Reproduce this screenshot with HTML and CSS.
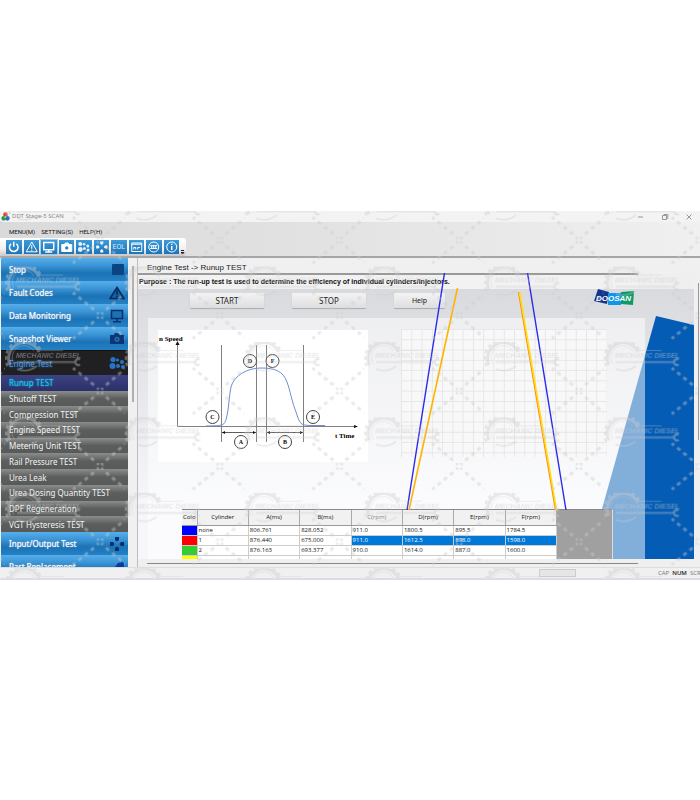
FILE: index.html
```html
<!DOCTYPE html>
<html lang="en">
<head>
<meta charset="utf-8">
<title>DDT Stage-5 SCAN</title>
<link rel="stylesheet" href="styles.css">
</head>
<body>
<div class="window">
  <header class="titlebar">
    <svg class="app-icon" viewBox="0 0 10 10"><circle cx="5" cy="3" r="2.6" fill="#d8432e"/><circle cx="3" cy="7" r="2.6" fill="#2d9a4a"/><circle cx="7" cy="7" r="2.6" fill="#2b6fc4"/><circle cx="5" cy="5.4" r="1" fill="#f4d35a"/></svg>
    <span class="title">DDT Stage-5 SCAN</span>
    <span class="controls">
      <button aria-label="Minimize"><svg viewBox="0 0 8 8"><path d="M1 4h5"/></svg></button>
      <button aria-label="Restore"><svg viewBox="0 0 8 8"><path d="M1.5 2.5h4v4h-4zM3 2.5v-1h3.8v4H5.5"/></svg></button>
      <button aria-label="Close"><svg viewBox="0 0 8 8"><path d="M1.5 1.5l5 5M6.500 1.500l-5 5"/></svg></button>
    </span>
  </header>
  <div class="bars">
    <nav class="menu">
      <button>MENU(M)</button><button>SETTING(S)</button><button>HELP(H)</button>
    </nav>
    <div class="toolbar">
      <button aria-label="Power"><svg viewBox="0 0 14 14"><path d="M4.400 3.800a4.300 4.300 0 1 0 5.200 0M7 1.800v5" stroke-width="1.500"/></svg></button>
      <button aria-label="Fault codes"><svg viewBox="0 0 14 14"><path d="M7 2L12.500 11.800h-11zM7 5.200v3.600M7 9.600v1.200" /></svg></button>
      <button class="on" aria-label="Data monitoring"><svg viewBox="0 0 14 14"><path d="M2 2.500h10v7.200H2zM7 9.700v2.100M3.500 12h7" stroke-width="1.400"/></svg></button>
      <button aria-label="Snapshot"><svg viewBox="0 0 14 14"><path d="M2 4.500h2.800l.7-1.500h3l.7 1.500H12v7H2z" fill="#fff"/><circle cx="7" cy="7.900" r="1.700" fill="#2683c6" stroke="none"/></svg></button>
      <button aria-label="Engine test"><svg viewBox="0 0 14 14"><g fill="#e4f1fb" stroke="none"><circle cx="3.500" cy="4" r="2"/><circle cx="3.500" cy="9.500" r="2.400"/><circle cx="7.300" cy="4.200" r="1.300"/><circle cx="7.600" cy="8.600" r="1.500"/><circle cx="11" cy="6" r="1.500"/><circle cx="11.300" cy="10" r="1.500"/></g></svg></button>
      <button aria-label="Input/output test"><svg viewBox="0 0 14 14"><g fill="#fff" stroke="none"><path d="M5.500 1.500h3v2L7 5 5.500 3.500zM5.500 12.500h3v-2L7 9l-1.500 1.500zM1.500 5.500v3h2L5 7 3.500 5.500zM12.500 5.500v3h-2L9 7l1.500-1.500z"/></g></svg></button>
      <button aria-label="EOL" class="eol">EOL</button>
      <button aria-label="Parameters"><svg viewBox="0 0 14 14"><path d="M2 3h10v8.500H2zM2 4.200h10" /><path d="M4 9.500V7.500h2v2M8 9.500v-2h2"/></svg></button>
      <button aria-label="DCU"><svg viewBox="0 0 14 14"><circle cx="7" cy="7" r="5"/><path d="M3.500 5.700h7M3.500 8.500h7M5 5.700v2.800M7 5.700v2.800M9 5.700v2.800"/></svg></button>
      <button aria-label="Information"><svg viewBox="0 0 14 14"><circle cx="7" cy="7" r="5"/><path d="M7 6v4M7 3.800v1.200" stroke-width="1.400"/></svg></button>
      <svg class="more" viewBox="0 0 4 14"><path d="M0 9.500h3M0 11.500h3l-1.500 1.500z"/></svg>
    </div>
  </div>

  <div class="body">
    <aside class="sidebar">
      <a class="item" href="#">Stop <svg viewBox="0 0 16 14"><rect x="3" y="1" width="12" height="11" rx="1" fill="#0b4480"/></svg></a>
      <a class="item" href="#">Fault Codes <svg viewBox="0 0 16 14"><path d="M8 1.500L15 12.500H1z" fill="#1262a5" stroke="#08285c" stroke-width="1.500"/><path d="M8 4.500v4.200M8 9.700v1.500" stroke="#08285c" stroke-width="1.600"/></svg></a>
      <a class="item" href="#">Data Monitoring <svg viewBox="0 0 16 14"><path d="M2.500 1.500h11v8h-11zM8 9.500v3M4 12.700h8" fill="#1d72b6" stroke="#08306a" stroke-width="1.600"/></svg></a>
      <a class="item" href="#">Snapshot Viewer <svg viewBox="0 0 16 14"><path d="M1 3h4l1-2h4l1 2h4v9H1z" fill="#0a3678"/><circle cx="8" cy="7.300" r="2.500" fill="#2a6fb0"/><circle cx="8" cy="7.300" r="1" fill="#0a3678"/></svg></a>
      <a class="item current" href="#">Engine Test <svg viewBox="0 0 16 14"><g fill="#2673c8"><circle cx="4" cy="3.500" r="2.600"/><circle cx="3.500" cy="10" r="3"/><circle cx="8.500" cy="4" r="1.600"/><circle cx="9" cy="10" r="2"/><circle cx="13" cy="6" r="2"/><circle cx="14" cy="11" r="2"/></g></svg></a>
      <div class="tests">
        <a class="chosen" href="#">Runup TEST</a>
        <a href="#">Shutoff TEST</a>
        <a href="#">Compression TEST</a>
        <a href="#">Engine Speed TEST</a>
        <a href="#">Metering Unit TEST</a>
        <a href="#">Rail Pressure TEST</a>
        <a href="#">Urea Leak</a>
        <a href="#">Urea Dosing Quantity TEST</a>
        <a href="#">DPF Regeneration</a>
        <a href="#">VGT Hysteresis TEST</a>
      </div>
      <a class="item" href="#">Input/Output Test <svg viewBox="0 0 16 14"><path d="M6 0h4v3L8 4.500 6 3zM6 14h4v-3L8 9.500 6 11zM1 5v4h3l1.500-2L4 5zM15 5v4h-3l-1.500-2L12 5z" fill="#0a2f70"/></svg></a>
      <a class="item" href="#">Part Replacement <svg viewBox="0 0 16 14"><path d="M1 8l5-1 3-4 5-1 1 2v8H3z" fill="#0a3aa0"/></svg></a>
    </aside>
    <div class="splitter"></div>

    <main class="main">
      <h1 class="crumb">Engine Test -&gt; Runup TEST</h1>
      <p class="purpose">Purpose : The run-up test is used to determine the efficiency of individual cylinders/injectors.</p>
      <section class="stage">
        <svg class="art" viewBox="0 0 110 243"><path d="M72 0L110 9V243H4z" fill="#045cb5"/></svg>
        <div class="actions">
          <button class="wide">START</button>
          <button class="wide">STOP</button>
          <button class="small">Help</button>
          <svg class="logo" viewBox="0 0 40 18">
            <path d="M4 0L15 3 13 15 0 12z" fill="#12368f"/><path d="M14 4h13v12H14z" fill="#1295e6"/><path d="M27 3l13-1-1 14-12-1z" fill="#0b9a68"/>
            <text x="2" y="12">DOOSAN</text>
          </svg>
        </div>
        <div class="panel">
          <div class="plots">
            <svg class="diagram" viewBox="0 0 210 132">
              <g stroke="#808080" fill="none"><path d="M19.500 14V96.500H198"/><path d="M63.500 15v97M98.500 15v97M108.500 15v97M145.500 15v97"/></g>
              <path d="M64 102.500H98M109 102.500H145" stroke="#333" stroke-width=".8"/>
              <path d="M19.500 11l-2 4h4zM200 96.500l-4-1.500v3zM64 102.500l3-1.500v3zM98 102.500l-3-1.500v3zM109 102.500l3-1.500v3zM145 102.500l-3-1.500v3z" fill="#111"/>
              <path d="M48 96C66 95.500 66 96 68.500 88 71 78 71 66 73 57 76 45 90 38 103 38 117 38 125 41 129 52 132 60 134 72 138 82 142 94 142 95 152 95.500H167" fill="none" stroke="#6c8fd0"/>
              <g fill="#fff" stroke="#444"><circle cx="92" cy="31" r="6.500"/><circle cx="114.500" cy="31" r="6.500"/><circle cx="54.500" cy="87" r="6.500"/><circle cx="155" cy="87" r="6.500"/><circle cx="83" cy="112" r="6.500"/><circle cx="127" cy="112" r="6.500"/></g>
              <g class="marks"><text x="92" y="33">D</text><text x="114.500" y="33">F</text><text x="54.500" y="89">C</text><text x="155" y="89">E</text><text x="83" y="114">A</text><text x="127" y="114">B</text></g>
              <text x="1" y="11">n Speed</text><text x="177" y="108">t Time</text>
            </svg>
            <svg class="grid" viewBox="0 0 206 128">
              <defs><pattern id="cell" width="10.280" height="10.280" patternUnits="userSpaceOnUse"><path d="M0 .5H10.280M.5 0V10.280" stroke="#e5e6e8" fill="none"/></pattern></defs>
              <rect width="206" height="128" fill="#f8f8f8"/><rect width="206" height="128" fill="url(#cell)"/>
            </svg>
          </div>
          <div class="sheet">
            <table>
              <thead><tr><th class="c0">Colo</th><th>Cylinder</th><th>A(ms)</th><th>B(ms)</th><th class="dim">C(rpm)</th><th>D(rpm)</th><th>E(rpm)</th><th>F(rpm)</th></tr></thead>
              <tbody>
                <tr><td class="blue"></td><td>none</td><td>806.761</td><td>828.052</td><td>911.0</td><td>1800.5</td><td>895.5</td><td>1784.5</td></tr>
                <tr><td class="red"></td><td>1</td><td>876.440</td><td>675.000</td><td class="sel">911.0</td><td class="sel">1612.5</td><td class="sel">898.0</td><td class="sel">1598.0</td></tr>
                <tr><td class="green"></td><td>2</td><td>876.163</td><td>693.377</td><td>910.0</td><td>1614.0</td><td>887.0</td><td>1600.0</td></tr>
                <tr class="last"><td class="yellow"></td><td></td><td></td><td></td><td></td><td></td><td></td><td></td></tr>
              </tbody>
            </table>
          </div>
        </div>
      </section>
      <div class="foot"></div>
      <svg class="traces" viewBox="0 0 170 237">
        <g fill="none" stroke-width="1.400"><path d="M38.500 0L1 237M121.500 0L160 237" stroke="#2a2aef"/><path d="M51.500 15L3 237" stroke="#ffb400" stroke-width="1.600"/><path d="M112.500 19L149.500 237" stroke="#ff8a20"/><path d="M113.500 19L150.500 237" stroke="#ffe000" stroke-width="1.500"/></g>
      </svg>
    </main>
    <div class="scroll"></div>
  </div>

  <footer class="status"><span class="box"></span><span class="keys"><span>CAP</span><b>NUM</b><span>SCRL</span></span></footer>

  <svg class="mark" aria-hidden="true">
    <defs>
      <pattern id="tile" x="5" y="131" width="119.750" height="75.400" patternUnits="userSpaceOnUse">
        <g fill="none" stroke="#cdcdcd">
          <path d="M5 23A15 15 0 0 1 34 10" stroke-width="3"/>
          <path d="M2.500 24A17.500 17.500 0 0 1 36 9" stroke-width="2.500" stroke-dasharray="3.500 3"/>
          <path d="M9 22A11 11 0 0 1 29 9" stroke-width=".8"/>
          <path d="M34 8.500H58" stroke-width=".8"/>
          <path d="M12 20H70" stroke-width="2.500" stroke-opacity=".7"/>
          <path d="M75 17.500a3 3 0 1 0 0 5" stroke-width="2.200"/>
          <path d="M12 27c8 3 14 2 20-3" stroke-width="1.500"/>
          <path d="M89 43L68 26M101 43L120 27M89 55L68 72M101 55L120 71" stroke-width="3" stroke-dasharray="4 4"/>
          <rect x="92.500" y="46.500" width="5" height="5" stroke-width="1.800" stroke-dasharray="3.500 1.500" stroke-dashoffset="1.700"/>
        </g>
        <text x="11" y="16">MECHANIC DIESEL</text>
      </pattern>
    </defs>
    <rect width="100%" height="100%" fill="url(#tile)"/>
  </svg>
</div>
</body>
</html>
```
FILE: styles.css
```css
* { box-sizing: border-box; }
body { margin: 0; background: #fff; font-family: "Noto Sans", sans-serif; color: #222; }
button { border: 0; padding: 0; margin: 0; background: none; font: inherit; color: inherit; }
a { text-decoration: none; color: inherit; }
svg { display: block; }

.window { position: relative; margin-top: 211px; background: #efefef; border-bottom: 2px solid #dcdee6; overflow: hidden; }
.mark { position: absolute; inset: 0; width: 100%; height: 100%; opacity: .42; pointer-events: none; }
.mark text { font: italic bold 7px "Liberation Sans Narrow", "Liberation Sans", sans-serif; fill: #cdcdcd; }

.titlebar { display: flex; align-items: center; height: 11px; background: #f3f3f3; font-size: 6px; line-height: 11px; color: #8a8a8a; }
.app-icon { width: 9px; height: 9px; margin: 0 2px 0 1px; }
.controls { display: flex; gap: 16px; margin-left: auto; padding-right: 7px; }
.controls svg { width: 8px; height: 8px; fill: none; stroke: #999; }

.bars { background: linear-gradient(90deg, #dadada, #e2e2e2 45%, #f0f0f0); border-bottom: 2px solid #a6a6a6; }
.menu { display: flex; gap: 6px; height: 16px; padding: 2px 0 0 9px; font: 6px/16px Roboto, sans-serif; color: #111; }
.toolbar { position: relative; display: grid; grid-template-columns: repeat(10, 1fr); width: 186px; height: 18px; padding: 1px 6px 1px 5px; background: linear-gradient(#fff, #f2f2f2 60%, #c8c8c8); border-radius: 0 3px 3px 0; }
.toolbar button { margin: 1px; background: linear-gradient(#3b9bdb, #1c74b8); }
.toolbar button.on { box-shadow: 0 0 0 1px #9ccbee; }
.toolbar svg { width: 100%; height: 14px; fill: none; stroke: #fff; stroke-width: 1; }
.toolbar .more { position: absolute; right: 1px; bottom: 1px; width: 4px; stroke: #222; }
.toolbar .eol { font: 7px/14px Roboto, sans-serif; color: #d8ecfa; }

.body { display: flex; height: 309px; }
.sidebar { flex: none; width: 127px; margin-left: 1px; overflow: hidden; font-size: 8px; color: #f4f4f4; }
.item { display: flex; align-items: center; justify-content: space-between; height: 23px; padding: 0 3px 0 8px; background: linear-gradient(#56aeea, #3d97d8 30%, #1b73b6 65%, #2480c4); text-shadow: 0 0 1px #fff; }
.item svg { width: 16px; height: 14px; }
.item.current { height: 25px; background: #202022; color: #4f93d8; border-top: 1px solid #111; text-shadow: 0 0 3px #2d7fe0; }
.tests { display: grid; grid-auto-rows: 1fr; height: 157px; }
.tests a { display: flex; align-items: center; padding-left: 8px; background: linear-gradient(#8b8d8c, #747675 25%, #5c5e5d 50%, #585a59); }
.tests .chosen { background: linear-gradient(#3d4282, #2a3068); color: #12d2e8; text-shadow: 0 0 2px #12b2e8; }
.splitter { flex: none; width: 9px; background: linear-gradient(#b0b0b0, #b0b0b0) 4px 8px / 2px 136px no-repeat #f0f0f0; }
.scroll { flex: none; width: 6px; background: linear-gradient(#999, #999) 4px 25px / 1px 157px no-repeat #f0f0f0; }

.main { position: relative; flex: 1; min-width: 0; border-left: 1px solid #bdbdbd; }
.crumb { margin: 0; height: 15px; padding: 4px 0 0 9px; font: 8px/11px "Liberation Sans", sans-serif; background: #f0f0f0; }
.purpose { margin: 0 56px 0 0; height: 16px; padding-left: 1px; border-top: 2px solid #999; background: #f2f2f2; font: bold 7px/14px "Liberation Sans", sans-serif; color: #111; white-space: nowrap; }
.stage { position: relative; height: 270px; background: linear-gradient(#d9dadd, #e6e7ea 35%, #f6f7fa 80%); }
.art { position: absolute; right: 0; bottom: 0; width: 110px; height: 243px; }
.actions { display: flex; align-items: flex-start; height: 29px; padding: 4px 60px 0 52px; }
.actions button { height: 15px; border-radius: 1px; background: linear-gradient(#f3f3f3, #dedee0); box-shadow: 0 1px 1px #aaa; line-height: 15px; }
.actions .wide { width: 74px; margin-right: 28px; font-size: 8px; }
.actions .small { width: 51px; font-size: 7px; }
.logo { width: 40px; height: 18px; margin: -4px 0 0 auto; }
.logo text { font: italic bold 8px "Liberation Sans", sans-serif; fill: #fff; }
.panel { position: relative; height: 241px; margin: 0 49px 0 10px; padding: 11px 0 0; background: rgba(255, 255, 255, .5); display: flex; flex-direction: column; justify-content: space-between; }
.plots { display: flex; gap: 33px; padding-left: 10px; }
.diagram { width: 210px; height: 132px; margin-top: 1px; background: #fff; font: bold 7px "Liberation Serif", serif; }
.marks { text-anchor: middle; font-size: 6px; }
.grid { width: 206px; height: 128px; }
.sheet { margin: 0 32px 0 34px; height: 50px; overflow: hidden; background: #a0a0a0; border-top: 1px solid #888; border-right: 1px solid #ddd; }
table { width: 375px; table-layout: fixed; border-collapse: collapse; font: 6px/9px "Open Sans", sans-serif; color: #111; background: #fff; }
th { height: 15px; padding: 1px 0 0; font-weight: 400; background: #f1f1f1; border-right: 1px solid #aaa; border-bottom: 1px solid #999; }
.c0 { width: 15px; }
.dim { color: #888; }
td { height: 10px; padding: 0 1px; border-right: 1px solid #ccc; border-bottom: 1px solid #ccc; }
.blue { background: #00f; }
.red { background: #f00; }
.green { background: #32cd32; }
.yellow { background: #ff0; }
.sel { background: #0078d7; color: #fff; }
.foot { height: 8px; background: linear-gradient(#888, #888) 9px 4px / calc(100% - 65px) 1px no-repeat #efefef; }
.traces { position: absolute; right: 118px; top: 15px; width: 170px; height: 237px; }

.status { display: flex; align-items: center; height: 11px; border-top: 1px solid #ddd; background: #f0f0f0; font: 6px/10px "Open Sans", sans-serif; color: #777; overflow: hidden; }
.box { width: 37px; height: 8px; margin-left: auto; border: 1px solid #ccc; background: #e6e6e6; }
.keys { display: flex; gap: 3px; width: 42px; margin-left: 82px; }
.keys b { font-weight: 600; color: #222; }
```
